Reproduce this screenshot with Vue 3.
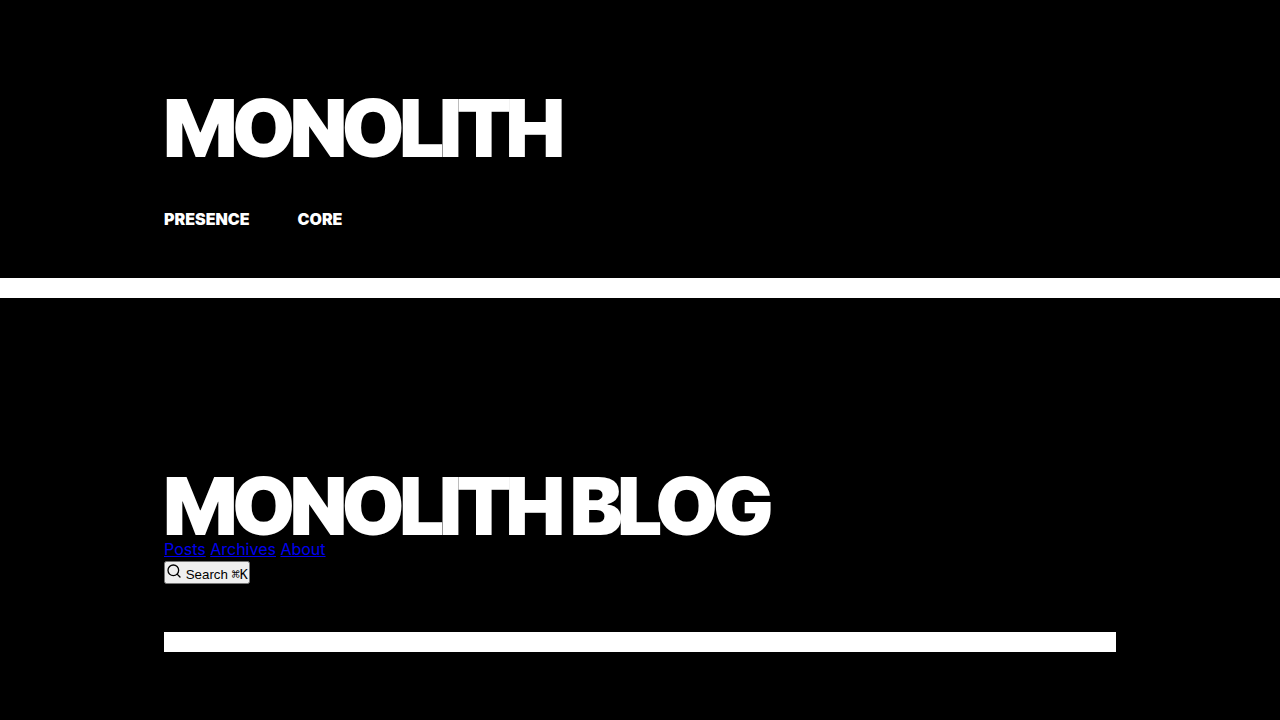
<script setup>
const sections = ['Presence', 'Core']
const links = ['Posts', 'Archives', 'About']
</script>

<template>
  <header class="masthead">
    <div class="inner">
      <div class="brand">Monolith</div>
      <nav class="sections">
        <a v-for="s in sections" :key="s" href="#">{{ s }}</a>
      </nav>
    </div>
  </header>
  <main class="inner">
    <header class="blog">
      <h1>Monolith Blog</h1>
      <nav><template v-for="l in links" :key="l"><a href="#">{{ l }}</a>{{ ' ' }}</template></nav>
      <button type="button">
        <svg width="16" height="16" viewBox="0 0 24 24" fill="none" stroke="currentColor" stroke-width="2" stroke-linecap="round" stroke-linejoin="round" aria-hidden="true"><circle cx="11" cy="11" r="8" /><path d="m21 21-4.3-4.3" /></svg>
        <span> Search </span>
        <kbd>⌘K</kbd>
      </button>
    </header>
  </main>
</template>

<style>
body {
  background: #000;
}
</style>

<style scoped>
.masthead,
main {
  font-family: Inter, "Liberation Sans", sans-serif;
  font-size: 16px;
  line-height: 22px;
  color: #fff;
}
.masthead {
  padding: 80px 0 48px;
  border-bottom: 20px solid #fff;
}
.inner {
  box-sizing: border-box;
  max-width: 1000px;
  margin: 0 auto;
  padding: 0 24px;
}
.brand,
h1 {
  margin: 0;
  font-family: "Inter Tight", Inter, sans-serif;
  font-size: 80px;
  line-height: 64px;
  font-weight: 900;
  letter-spacing: -0.05em;
  text-transform: uppercase;
}
.brand {
  line-height: 96px;
}
.sections {
  display: flex;
  gap: 48px;
  margin-top: 32px;
}
.sections a {
  color: #fff;
  font-weight: 900;
  text-decoration: none;
  text-transform: uppercase;
}
.blog {
  margin-top: 176px;
  padding-bottom: 48px;
  border-bottom: 20px solid #fff;
}
.blog nav {
  line-height: 23px;
}
.blog nav a {
  color: #00e;
}
button {
  padding: 0;
}
</style>
